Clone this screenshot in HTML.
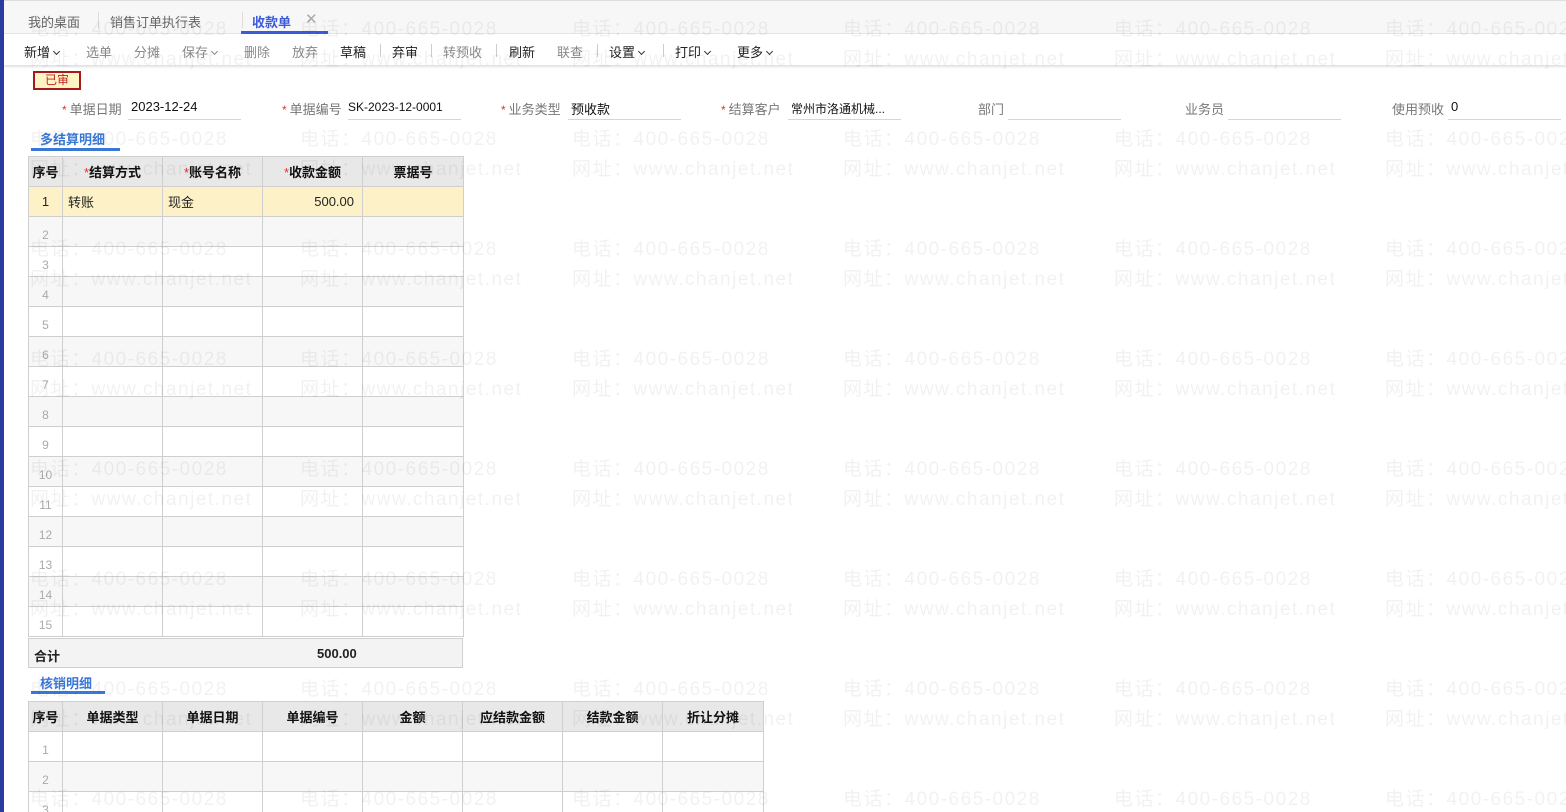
<!DOCTYPE html>
<html><head><meta charset="utf-8"><style>
*{box-sizing:border-box;margin:0;padding:0}
html{width:1566px;height:812px;overflow:hidden}
body{width:1566px;height:812px;overflow:hidden;background:#fff;font-family:"Liberation Sans","Noto Sans CJK SC",sans-serif;font-size:13px;color:#222;position:relative}
.strip{position:absolute;left:0;top:0;width:4px;height:812px;background:#2a3c9e}
.tabs{position:absolute;left:4px;top:0;width:1562px;height:34px;background:#f7f7f7;border-top:1px solid #ddd;border-bottom:1px solid #e4e4e4}
.tab{position:absolute;top:11px;font-size:13px;color:#666}
.sep{position:absolute;top:11px;width:1px;height:16px;background:#ddd}
.tb{position:absolute;left:4px;top:34px;width:1562px;height:31px;background:#fff;box-shadow:0 2px 2px rgba(0,0,0,0.12)}
.ti{position:absolute;top:8px;font-size:13px;color:#222}
.ti.g{color:#888}
.vs{position:absolute;top:10px;width:1px;height:13px;background:#ccc}
.chev{display:inline-block;width:5px;height:5px;border-right:1.5px solid #333;border-bottom:1.5px solid #333;transform:rotate(45deg);margin-left:4px;position:relative;top:-3px}
.badge{position:absolute;left:33px;top:71px;width:48px;height:19px;border:2px solid #a51a1a;background:#fff4c4;color:#c02020;font-size:12px;text-align:center;line-height:15px}
.lbl{position:absolute;top:99px;font-size:13px;color:#777;text-align:right}
.lbl b{color:#d33;font-weight:normal;font-size:12px;margin-right:3px}
.val{position:absolute;top:99px;font-size:13px;color:#111}
.ul{position:absolute;top:119px;height:1px;background:#d6d6d6;width:113px}
.sec{position:absolute;font-size:13px;color:#3a78d8;font-weight:bold}
.secl{position:absolute;height:3px;background:#3a78d8}
table{position:absolute;border-collapse:collapse;table-layout:fixed}
td,th{border:1px solid #cfcfcf;height:30px;font-size:13px;padding:0 5px}
th{background:#e8e8e8;font-weight:bold;color:#111}
th b{color:#d33;font-weight:normal;font-size:13px}
td.n{color:#aaa;font-size:12px;text-align:center;vertical-align:bottom;padding-bottom:4px}
tr.e td{background:#f7f7f7}
tr.y td{background:#fdf2c7;color:#222;vertical-align:middle}
.tot{position:absolute;left:28px;top:638px;width:435px;height:30px;background:#f3f3f3;border:1px solid #cfcfcf;font-weight:bold;font-size:13px}
.wm{position:absolute;font-size:19px;line-height:30px;color:rgba(0,0,0,0.055);white-space:nowrap;pointer-events:none;font-family:"Liberation Sans","Noto Sans CJK SC",sans-serif;letter-spacing:1.5px}
</style></head><body>
<div class="strip"></div>
<div class="tabs">
<span class="tab" style="left:24px">我的桌面</span><span class="sep" style="left:94px"></span>
<span class="tab" style="left:106px">销售订单执行表</span><span class="sep" style="left:238px"></span>
<span class="tab" style="left:248px;color:#3b5bdb;font-weight:bold">收款单</span>
<span class="tab" style="left:301px;color:#aaa;font-size:15px;top:9px">✕</span>
<div style="position:absolute;left:237px;top:30px;width:87px;height:3px;background:#3b5bdb"></div>
</div>
<div class="tb">
<span class="ti" style="left:20px">新增<i class="chev"></i></span>
<span class="ti g" style="left:82px">选单</span>
<span class="ti g" style="left:130px">分摊</span>
<span class="ti g" style="left:178px">保存<i class="chev" style="border-color:#888"></i></span>
<span class="ti g" style="left:240px">删除</span>
<span class="ti g" style="left:288px">放弃</span>
<span class="ti" style="left:336px">草稿</span><span class="vs" style="left:376px"></span>
<span class="ti" style="left:388px">弃审</span><span class="vs" style="left:427px"></span>
<span class="ti g" style="left:439px">转预收</span><span class="vs" style="left:492px"></span>
<span class="ti" style="left:505px">刷新</span>
<span class="ti g" style="left:553px">联查</span><span class="vs" style="left:593px"></span>
<span class="ti" style="left:605px">设置<i class="chev"></i></span><span class="vs" style="left:659px"></span>
<span class="ti" style="left:671px">打印<i class="chev"></i></span>
<span class="ti" style="left:733px">更多<i class="chev"></i></span>
</div>
<div class="badge">已审</div>

<span class="lbl" style="left:62px"><b>*</b>单据日期</span><span class="val" style="left:131px">2023-12-24</span><div class="ul" style="left:128px"></div>
<span class="lbl" style="left:282px"><b>*</b>单据编号</span><span class="val" style="left:348px;font-size:12px;top:100px">SK-2023-12-0001</span><div class="ul" style="left:348px"></div>
<span class="lbl" style="left:501px"><b>*</b>业务类型</span><span class="val" style="left:571px">预收款</span><div class="ul" style="left:568px"></div>
<span class="lbl" style="left:721px"><b>*</b>结算客户</span><span class="val" style="left:791px;font-size:12px;top:100px">常州市洛通机械...</span><div class="ul" style="left:788px"></div>
<span class="lbl" style="left:978px">部门</span><div class="ul" style="left:1008px"></div>
<span class="lbl" style="left:1185px">业务员</span><div class="ul" style="left:1228px"></div>
<span class="lbl" style="left:1392px">使用预收</span><span class="val" style="left:1451px">0</span><div class="ul" style="left:1448px"></div>

<span class="sec" style="left:40px;top:129px">多结算明细</span><div class="secl" style="left:31px;top:148px;width:89px"></div>
<table style="left:28px;top:156px;width:435px">
<colgroup><col style="width:34px"><col style="width:100px"><col style="width:100px"><col style="width:100px"><col style="width:101px"></colgroup>
<tr><th style="padding:0 3px">序号</th><th><b>*</b>结算方式</th><th><b>*</b>账号名称</th><th><b>*</b>收款金额</th><th>票据号</th></tr>
<tr class="y"><td style="text-align:center">1</td><td>转账</td><td>现金</td><td style="text-align:right;padding-right:8px">500.00</td><td></td></tr>
<tr class="e"><td class="n">2</td><td></td><td></td><td></td><td></td></tr>
<tr><td class="n">3</td><td></td><td></td><td></td><td></td></tr>
<tr class="e"><td class="n">4</td><td></td><td></td><td></td><td></td></tr>
<tr><td class="n">5</td><td></td><td></td><td></td><td></td></tr>
<tr class="e"><td class="n">6</td><td></td><td></td><td></td><td></td></tr>
<tr><td class="n">7</td><td></td><td></td><td></td><td></td></tr>
<tr class="e"><td class="n">8</td><td></td><td></td><td></td><td></td></tr>
<tr><td class="n">9</td><td></td><td></td><td></td><td></td></tr>
<tr class="e"><td class="n">10</td><td></td><td></td><td></td><td></td></tr>
<tr><td class="n">11</td><td></td><td></td><td></td><td></td></tr>
<tr class="e"><td class="n">12</td><td></td><td></td><td></td><td></td></tr>
<tr><td class="n">13</td><td></td><td></td><td></td><td></td></tr>
<tr class="e"><td class="n">14</td><td></td><td></td><td></td><td></td></tr>
<tr><td class="n">15</td><td></td><td></td><td></td><td></td></tr>
</table>
<div class="tot"><span style="position:absolute;left:5px;top:7px">合计</span><span style="position:absolute;left:288px;top:7px">500.00</span></div>

<span class="sec" style="left:40px;top:673px">核销明细</span><div class="secl" style="left:31px;top:691px;width:74px"></div>
<table style="left:28px;top:701px;width:735px">
<colgroup><col style="width:34px"><col style="width:100px"><col style="width:100px"><col style="width:100px"><col style="width:100px"><col style="width:100px"><col style="width:100px"><col style="width:101px"></colgroup>
<tr><th style="padding:0 3px">序号</th><th>单据类型</th><th>单据日期</th><th>单据编号</th><th>金额</th><th>应结款金额</th><th>结款金额</th><th>折让分摊</th></tr>
<tr><td class="n">1</td><td></td><td></td><td></td><td></td><td></td><td></td><td></td></tr>
<tr class="e"><td class="n">2</td><td></td><td></td><td></td><td></td><td></td><td></td><td></td></tr>
<tr><td class="n">3</td><td></td><td></td><td></td><td></td><td></td><td></td><td></td></tr>
</table>

<div id="wm"></div>
<script>
var h='';var xs=[30,300,572,843,1114,1385];
for(var r=0;r<8;r++)for(var c=0;c<6;c++){h+='<div class="wm" style="left:'+xs[c]+'px;top:'+(15+110*r)+'px">电话：400-665-0028<br>网址：www.chanjet.net</div>';}
document.getElementById('wm').innerHTML=h;
</script>
</body></html>
